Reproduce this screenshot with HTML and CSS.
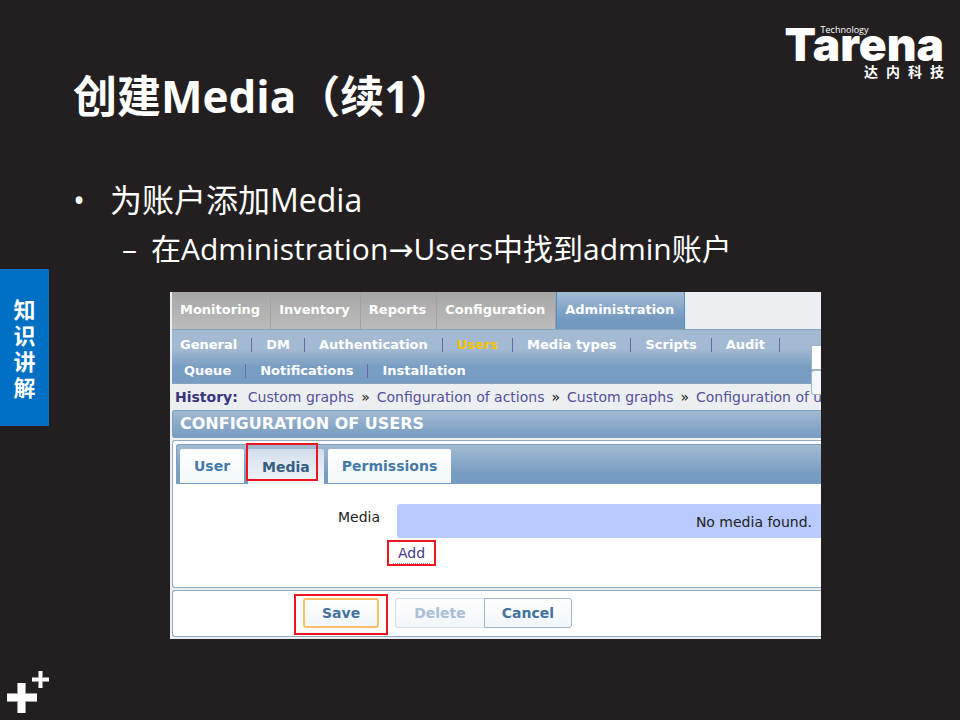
FILE: index.html
```html
<!DOCTYPE html>
<html lang="zh-CN">
<head>
<meta charset="utf-8">
<title>创建Media（续1）</title>
<link rel="stylesheet" href="styles.css">
</head>
<body>
<aside class="side">
  <div class="chapter">知识讲解</div>
  <svg class="plus" width="42" height="42" viewBox="0 0 42 42" aria-hidden="true">
    <path fill="#9b999a" d="M10 12h9v30h-9zM0 22h30v9H0zM31 0h5v17h-5zM25 6h17v5H25z"/>
    <path fill="#fff" d="M11 12h7v30h-7zM0 23h30v7H0zM32 0h3v17h-3zM25 7h17v3H25z"/>
  </svg>
</aside>
<main class="slide">
  <header class="head">
    <h1 class="title">创建Media（续1）</h1>
    <div class="logo">
      <span class="logo-tag">Technology</span>
      <span class="logo-name">Tarena</span>
      <span class="logo-cn"><span>达</span><span>内</span><span>科</span><span>技</span></span>
    </div>
  </header>
  <ul class="points">
    <li class="point">为账户添加Media
      <ul class="subpoints">
        <li class="subpoint">在Administration<span class="arrow">→</span>Users中找到admin账户</li>
      </ul>
    </li>
  </ul>
  <section class="shot">
    <nav class="mainnav">
      <a href="#">Monitoring</a><a href="#">Inventory</a><a href="#">Reports</a><a href="#">Configuration</a><a href="#" class="active">Administration</a>
    </nav>
    <nav class="subnav">
      <div class="subrow">
        <a href="#">General</a><i></i><a href="#">DM</a><i></i><a href="#">Authentication</a><i></i><a href="#" class="current">Users</a><i></i><a href="#">Media types</a><i></i><a href="#">Scripts</a><i></i><a href="#">Audit</a><i></i>
      </div>
      <div class="subrow second">
        <a href="#">Queue</a><i></i><a href="#">Notifications</a><i></i><a href="#">Installation</a>
      </div>
      <div class="search"><input type="text" aria-label="Search"><button type="button" aria-label="Search"></button></div>
    </nav>
    <div class="history">
      <b>History:</b><a href="#">Custom graphs</a><span>»</span><a href="#">Configuration of actions</a><span>»</span><a href="#">Custom graphs</a><span>»</span><a href="#">Configuration of users</a>
    </div>
    <h2 class="bar">CONFIGURATION OF USERS</h2>
    <form class="form">
      <div class="panel">
        <div class="tabs">
          <button type="button">User</button>
          <button type="button" class="selected marked">Media</button>
          <button type="button">Permissions</button>
        </div>
        <div class="fields">
          <div class="label">Media</div>
          <div class="value">
            <div class="empty">No media found.</div>
            <a href="#" class="add marked">Add</a>
          </div>
        </div>
      </div>
      <div class="panel actions">
        <button type="button" class="save marked">Save</button>
        <button type="button" class="delete" disabled>Delete</button>
        <button type="button" class="cancel">Cancel</button>
      </div>
    </form>
  </section>
</main>
</body>
</html>
```
FILE: styles.css
```css
* { box-sizing: border-box; }

body {
  margin: 0;
  min-height: 100vh;
  display: flex;
  background: #231f20;
  color: #fff;
  font-family: "Open Sans", "Noto Sans CJK SC", sans-serif;
}

a { color: inherit; text-decoration: none; }
button, input { font: inherit; margin: 0; }

.side {
  flex: 0 0 49px;
  display: flex;
  flex-direction: column;
  padding: 269px 0 7px;
}
.chapter {
  background: #0070c4;
  padding: 27px 13px 26px;
  font-size: 22px;
  line-height: 26px;
  font-weight: 700;
  text-align: center;
}
.plus { margin: auto 0 0 7px; }

.slide { flex: 1; min-width: 0; }

.head {
  display: flex;
  justify-content: space-between;
  align-items: flex-start;
  padding: 24px 16px 0 24px;
}
.title {
  margin: 42px 0 0;
  font-size: 44px;
  line-height: 60px;
  font-weight: 700;
}
.logo { position: relative; text-align: right; }
.logo-name {
  display: block;
  font-family: Inter, sans-serif;
  font-size: 46px;
  line-height: 40px;
  font-weight: 900;
}
.logo-tag {
  position: absolute;
  left: 36px;
  top: 0;
  font-size: 9px;
  line-height: 11px;
}
.logo-cn {
  display: flex;
  justify-content: flex-end;
  gap: 8px;
  font-size: 14px;
  line-height: 16px;
  font-weight: 700;
}

.points, .subpoints { margin: 0; padding: 0; list-style: none; }
.points { padding: 50px 24px 0; }
.point { position: relative; padding-left: 37px; font-size: 32px; line-height: 48px; }
.point::before { content: "•"; position: absolute; left: 0; }
.subpoint { position: relative; padding-left: 41px; font-size: 30px; line-height: 50px; }
.subpoint::before { content: "–"; position: absolute; left: 12px; }
.arrow { font-family: "DejaVu Sans", sans-serif; line-height: 1; }

.shot {
  position: relative;
  margin: 18px 139px 0 121px;
  padding: 0 0 2px 2px;
  overflow: hidden;
  background: #eceff2;
  color: #222;
  font-family: "DejaVu Sans", sans-serif;
  font-size: 14px;
  line-height: 20px;
}

.mainnav { display: flex; font-size: 13px; font-weight: 700; color: #fff; }
.mainnav a {
  padding: 8px 10px 9px 8px;
  background: linear-gradient(#a6a6a6, #bcbcbc);
  border-right: 1px solid #a2a2a2;
}
.mainnav .active {
  background: linear-gradient(#a3bad4, #7399bf 75%);
  border: solid #4f8fc4;
  border-width: 0 1px;
}

.subnav {
  position: relative;
  padding: 2px 8px 0;
  border: solid #86a2bd;
  border-width: 1px 0;
  background: linear-gradient(#a4bad3 35%, #789dc2 70%);
  color: #fff;
  font-size: 13px;
  font-weight: 700;
}
.subrow { display: flex; align-items: center; gap: 14px; height: 26px; white-space: nowrap; }
.subrow i { width: 1px; height: 14px; background: #6669a4; }
.subrow.second { height: 25px; padding-left: 4px; }
.current { color: #f8c400; }
.search { position: absolute; left: 639px; top: 15px; z-index: 1; width: 100px; }
.search input, .search button {
  display: block;
  width: 100%;
  height: 25px;
  padding: 0;
  border: 1px solid #9db4cd;
  background: #fff;
}
.search button { background: #f5f9fb; border-radius: 3px; }

.history { display: flex; gap: 7px; height: 26px; padding: 3px 3px 0; white-space: nowrap; color: #55509a; }
.history b { margin-right: 3px; color: #39357f; }
.history span { color: #111; }

.bar {
  margin: 0;
  padding: 3px 7px;
  border: 1px solid #7d9ebd;
  border-right: 0;
  border-radius: 3px 0 0 3px;
  background: linear-gradient(#a2b9d2, #779cc1);
  color: #fff;
  font-size: 16px;
  line-height: 20px;
}

.form { display: flex; flex-direction: column; gap: 2px; padding-top: 2px; }
.panel { border: 1px solid #91abc3; border-right: 0; border-radius: 3px 0 0 3px; background: #fff; }
.tabs {
  display: flex;
  align-items: stretch;
  gap: 4px;
  margin: 3px 0 0 3px;
  padding: 4px 0 0 3px;
  height: 40px;
  background: linear-gradient(#a3bad3, #779cc1 75%);
  border: 1px solid #7f9fbd;
  border-width: 1px 0 0 1px;
  border-radius: 3px 0 0 0;
}
.tabs button {
  position: relative;
  margin-bottom: 1px;
  padding: 0 14px;
  border: 0;
  border-radius: 2px 2px 0 0;
  background: linear-gradient(#fff, #f2f7fa);
  color: #457aa8;
  font-weight: 700;
}
.tabs .selected { margin-bottom: 0; background: linear-gradient(#d3deeb, #f3f7fb); color: #385d83; }

.marked { position: relative; }
.marked::after { content: ""; position: absolute; border: 2px solid #ee151f; pointer-events: none; }
.tabs .marked::after { inset: -6px 6px 3px -2px; }
.add.marked::after { inset: -3px -6px; }
.save.marked::after { inset: -6px -11px -9px; }

.fields { display: flex; padding: 20px 0 23px; }
.label { width: 207px; padding-top: 3px; text-align: right; }
.value { flex: 1; margin-left: 17px; }
.empty {
  padding: 8px 9px 6px;
  border-radius: 3px 0 0 3px;
  background: #b9caff;
  text-align: right;
}
.add {
  display: inline-block;
  margin: 5px 0 0 -4px;
  padding: 0 5px;
  border-bottom: 1px dotted #78a;
  color: #453688;
}

.actions { display: flex; padding: 7px 0 8px 130px; }
.actions button {
  height: 30px;
  padding: 0 17px;
  border: 1px solid #9fb4cd;
  border-radius: 3px;
  background: linear-gradient(#fff, #f1f6fa);
  color: #43729f;
  font-weight: 700;
}
.actions .save { margin-right: 16px; border: 2px solid #fbbf68; }
.actions .delete { padding: 0 18px; border-color: #d3dfeb; border-right: 0; border-radius: 3px 0 0 3px; color: #a9c0d6; }
.actions .cancel { border-radius: 0 3px 3px 0; }
```
